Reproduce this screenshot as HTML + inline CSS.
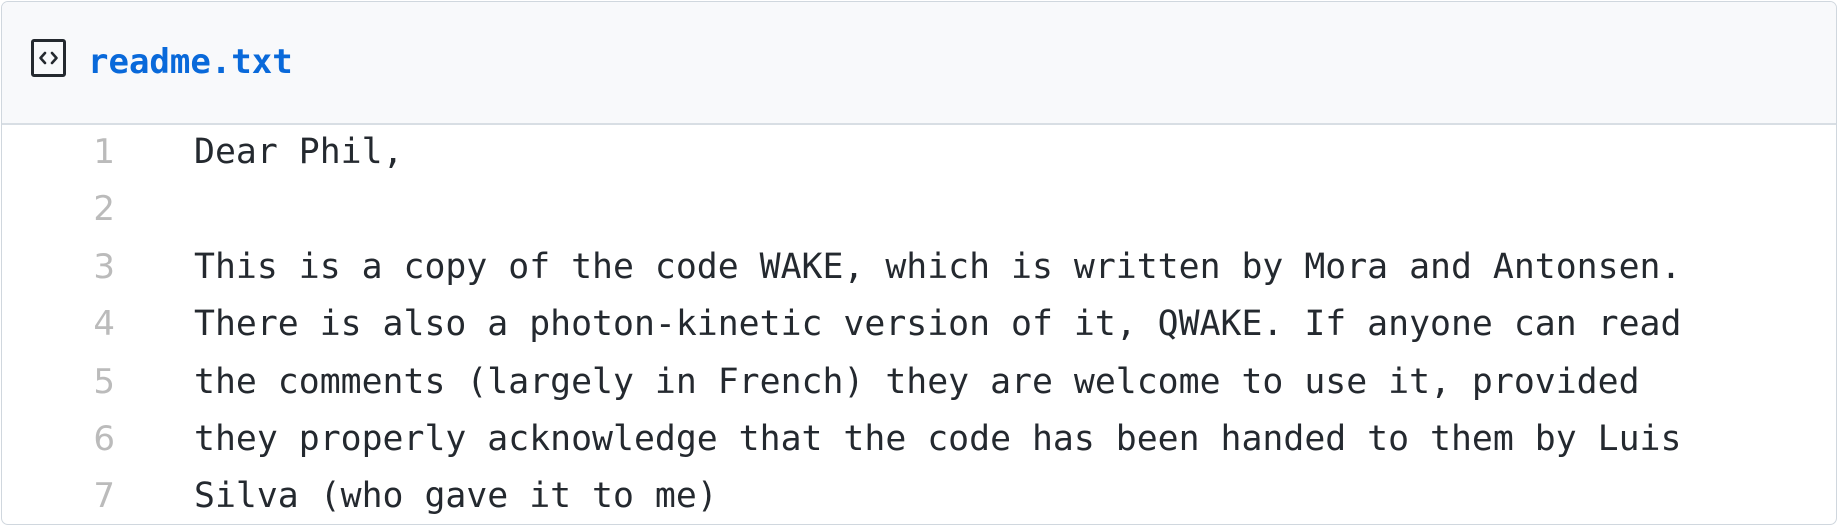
<!DOCTYPE html>
<html><head><style>
html,body{margin:0;padding:0;background:#fff;}
body{width:1838px;height:526px;overflow:hidden;position:relative;}
.box{position:absolute;left:1px;top:1px;width:1834px;height:522px;border:1px solid #d0d7de;border-radius:7px;overflow:hidden;}
.hdr{position:absolute;left:0;top:0;right:0;height:121px;background:#f8f9fb;border-bottom:2px solid #d8dee4;}
.icon{position:absolute;left:29px;top:37px;width:29px;height:32px;border:3px solid #24292f;border-radius:3px;}
.fname{position:absolute;left:86px;top:40px;font:bold 34px "DejaVu Sans Mono",monospace;color:#0969da;line-height:40px;}
.lines{position:absolute;left:0;top:122px;}
.ln{height:57.4px;line-height:57.4px;position:relative;white-space:pre;}
.n{position:absolute;left:0;width:113px;text-align:right;font:34px "DejaVu Sans",sans-serif;color:#bbbbbb;line-height:57.4px;}
.t{position:absolute;left:192px;font:34.8px "DejaVu Sans Mono",monospace;color:#24292f;line-height:57.4px;}
</style></head><body>
<div class="box">
<div class="hdr">
<div class="icon"><svg width="29" height="32" viewBox="0 0 29 32" style="position:absolute;left:0;top:0"><path d="M11 11 L6.5 16 L11 21 M18 11 L22.5 16 L18 21" fill="none" stroke="#24292f" stroke-width="2.6" stroke-linecap="round" stroke-linejoin="round"/></svg></div>
<div class="fname">readme.txt</div>
</div>
<div class="lines">
<div class="ln"><span class="n">1</span><span class="t">Dear Phil,</span></div>
<div class="ln"><span class="n">2</span><span class="t"></span></div>
<div class="ln"><span class="n">3</span><span class="t">This is a copy of the code WAKE, which is written by Mora and Antonsen.</span></div>
<div class="ln"><span class="n">4</span><span class="t">There is also a photon-kinetic version of it, QWAKE. If anyone can read</span></div>
<div class="ln"><span class="n">5</span><span class="t">the comments (largely in French) they are welcome to use it, provided</span></div>
<div class="ln"><span class="n">6</span><span class="t">they properly acknowledge that the code has been handed to them by Luis</span></div>
<div class="ln"><span class="n">7</span><span class="t">Silva (who gave it to me)</span></div>
</div>
</div>
</body></html>
